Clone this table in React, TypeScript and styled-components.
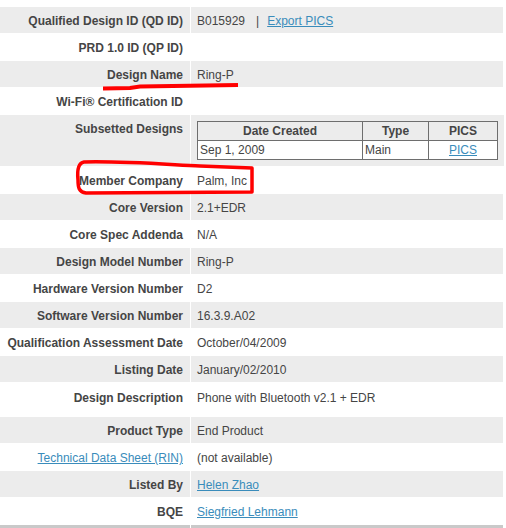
import React from "react";
import styled, { createGlobalStyle } from "styled-components";

const Global = createGlobalStyle`
  html, body { margin: 0; padding: 0; background: #fff; }
  body { font-family: "Liberation Sans", Arial, sans-serif; font-size: 12px; color: #454545; }
`;

const Page = styled.div`
  position: relative;
  width: 506px;
  height: 528px;
  overflow: hidden;
  padding-top: 7px;
  box-sizing: border-box;
`;

const Sheet = styled.div`
  width: 503px;
  display: flex;
  flex-direction: column;
`;

type Shade = "grey" | "white" | "dark";
const bg = (s: Shade) => (s === "grey" ? "#ececec" : s === "dark" ? "#c9c9c9" : "#ffffff");

const Row = styled.div<{ $shade: Shade; $h: number }>`
  display: grid;
  grid-template-columns: 190px 1fr;
  column-gap: 1px;
  height: ${(p) => p.$h}px;
  > * { background: ${(p) => bg(p.$shade)}; }
`;

const Label = styled.div<{ $pt: number }>`
  box-sizing: border-box;
  padding: ${(p) => p.$pt}px 7px 0 0;
  text-align: right;
  font-weight: bold;
  line-height: 14px;
  white-space: nowrap;
`;

const Value = styled.div<{ $pt: number }>`
  box-sizing: border-box;
  padding: ${(p) => p.$pt}px 6px 0 6px;
  line-height: 14px;
  white-space: nowrap;
`;

const Link = styled.a`
  color: #3a8cbb;
  text-decoration: underline;
  font-weight: normal;
  cursor: pointer;
`;

const Pipe = styled.span`
  margin: 0 8px 0 11px;
`;

const SubTable = styled.table`
  border-collapse: collapse;
  width: 300px;
  table-layout: fixed;
  margin-top: -1px;
  th, td {
    border: 1px solid #6e6e6e;
    padding: 2px 2px;
    line-height: 14px;
    height: 14px;
  }
  th { background: #ececec; font-weight: bold; text-align: center; }
  td { background: #fff; text-align: left; }
`;

const CenterCell = styled.td`
  && { text-align: center; }
`;

const Marks = styled.svg`
  position: absolute;
  left: 0;
  top: 0;
  pointer-events: none;
`;

type Item = { label: React.ReactNode; value?: React.ReactNode; h?: number; pt?: number };

const items: Item[] = [
  {
    label: "Qualified Design ID (QD ID)",
    value: (
      <>
        B015929<Pipe>|</Pipe>
        <Link>Export PICS</Link>
      </>
    ),
  },
  { label: "PRD 1.0 ID (QP ID)" },
  { label: "Design Name", value: "Ring-P" },
  { label: "Wi-Fi® Certification ID" },
  { label: "Subsetted Designs", h: 51 },
  { label: "Member Company", value: "Palm, Inc" },
  { label: "Core Version", value: "2.1+EDR" },
  { label: "Core Spec Addenda", value: "N/A" },
  { label: "Design Model Number", value: "Ring-P" },
  { label: "Hardware Version Number", value: "D2" },
  { label: "Software Version Number", value: "16.3.9.A02" },
  { label: "Qualification Assessment Date", value: "October/04/2009" },
  { label: "Listing Date", value: "January/02/2010" },
  { label: "Design Description", value: "Phone with Bluetooth v2.1 + EDR", h: 35, pt: 9 },
  { label: "Product Type", value: "End Product" },
  { label: <Link>Technical Data Sheet (RIN)</Link>, value: "(not available)" },
  { label: "Listed By", value: <Link>Helen Zhao</Link> },
  { label: "BQE", value: <Link>Siegfried Lehmann</Link> },
];

export default function App() {
  return (
    <Page>
      <Global />
      <Sheet>
        {items.map((it, i) => {
          const shade: Shade = i % 2 === 0 ? "grey" : "white";
          const h = it.h ?? (shade === "grey" ? 26 : 28);
          const pt = it.pt ?? (shade === "grey" ? 7 : 8);
          const isSub = it.label === "Subsetted Designs";
          return (
            <Row key={i} $shade={shade} $h={h}>
              <Label $pt={pt}>{it.label}</Label>
              <Value $pt={pt}>
                {isSub ? (
                  <SubTable>
                    <colgroup>
                      <col style={{ width: 165 }} />
                      <col style={{ width: 66 }} />
                      <col style={{ width: 69 }} />
                    </colgroup>
                    <thead>
                      <tr>
                        <th>Date Created</th>
                        <th>Type</th>
                        <th>PICS</th>
                      </tr>
                    </thead>
                    <tbody>
                      <tr>
                        <td>Sep 1, 2009</td>
                        <td>Main</td>
                        <CenterCell>
                          <Link>PICS</Link>
                        </CenterCell>
                      </tr>
                    </tbody>
                  </SubTable>
                ) : (
                  it.value
                )}
              </Value>
            </Row>
          );
        })}
        <Row $shade="dark" $h={10}>
          <Label $pt={0} />
          <Value $pt={0} />
        </Row>
      </Sheet>
      <Marks width="506" height="528" viewBox="0 0 506 528">
        <path
          d="M103 88.5 L130 88 L140 86.5 L238 85"
          stroke="#ff0000"
          strokeWidth="4"
          fill="none"
        />
        <path
          d="M84 162 C78 163 77 170 78 180 C78 188 79 192 86 193 L252 192 L252 168 L200 166 C160 164 120 161 84 162 Z"
          stroke="#ff0000"
          strokeWidth="3.5"
          fill="none"
          strokeLinejoin="round"
        />
      </Marks>
    </Page>
  );
}
